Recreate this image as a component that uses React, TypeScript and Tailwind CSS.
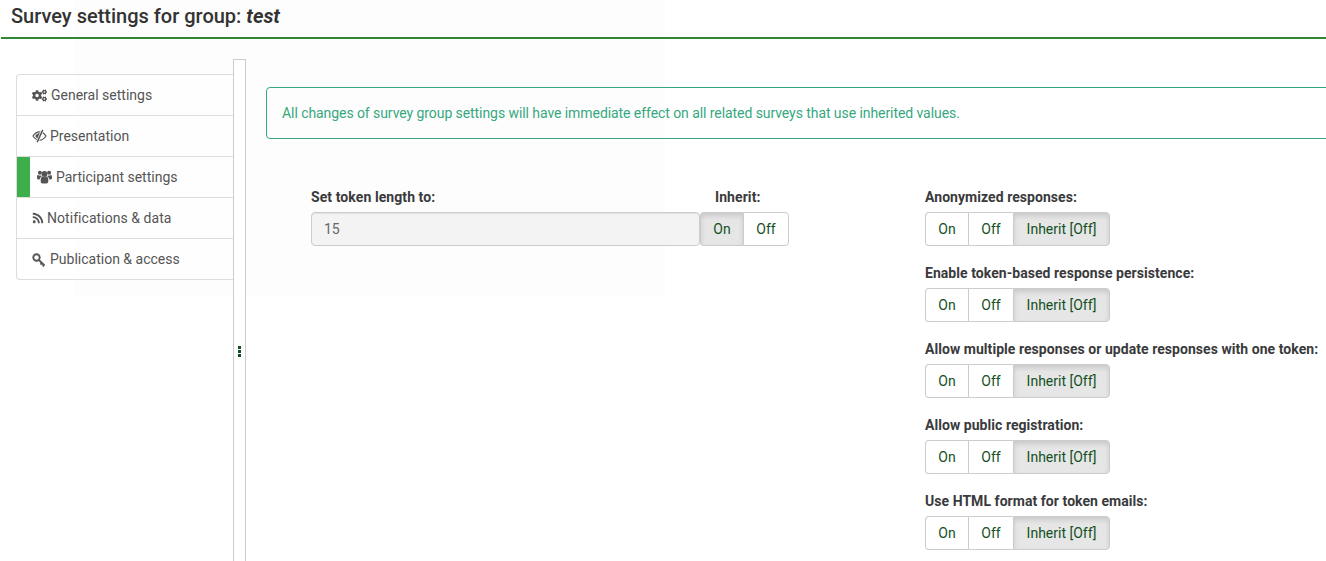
import type { ReactNode } from "react";
import { FaCogs, FaRss } from "react-icons/fa";

function EyeSlash() {
  return (
    <svg width="15" height="14" viewBox="0 0 16 15" className="shrink-0" fill="none">
      <path d="M1 7.5C3 4.6 5.4 3 8 3s5 1.6 7 4.5C13 10.4 10.6 12 8 12S3 10.4 1 7.5Z" stroke="#555" strokeWidth="1.3" />
      <path d="M3.5 7.5C4.6 5.8 6 4.8 7.8 4.4L9.6 4.9 6.4 10.6C5.2 10.1 4.300 9 3.500 7.500Z" fill="#555" />
      <path d="M11.500 1 5.500 14" stroke="#ffffff" strokeWidth="3" />
      <path d="M11.500 1 5.500 14" stroke="#555" strokeWidth="1.600" />
    </svg>
  );
}

function Users() {
  return (
    <svg width="15" height="14" viewBox="0 0 15 14" className="shrink-0" fill="#555">
      <circle cx="7.500" cy="4" r="2.900" />
      <circle cx="2.900" cy="2.800" r="2" />
      <circle cx="12.100" cy="2.800" r="2" />
      <path d="M3.700 9.500C3.700 7.700 4.600 6.700 5.600 6.500 6.700 7.400 8.300 7.400 9.400 6.500 10.400 6.700 11.300 7.700 11.300 9.500V11.500C11.300 12.800 10.400 13.500 9.300 13.500H5.700C4.600 13.500 3.700 12.800 3.700 11.500Z" />
      <path d="M0 6.600C0 5.600.5 5 1.200 5 2.100 5.700 3 5.800 3.900 5.600 4.100 6 4.400 6.200 4.700 6.400 3.500 6.900 2.700 8 2.700 9.400H1.200C.5 9.400 0 9 0 8.300Z" />
      <path d="M15 6.600C15 5.600 14.500 5 13.800 5 12.900 5.700 12 5.800 11.100 5.600 10.900 6 10.600 6.200 10.300 6.400 11.500 6.900 12.300 8 12.300 9.400H13.800C14.500 9.400 15 9 15 8.300Z" />
    </svg>
  );
}

function Key() {
  return (
    <svg width="14" height="14" viewBox="0 0 14 14" className="shrink-0" fill="none" stroke="#555">
      <circle cx="4.500" cy="4.500" r="3.200" strokeWidth="1.900" />
      <path d="M6.800 6.800 12.500 12.500M10 10l-1.500 1.500M12 12l-1.300 1.300" strokeWidth="1.900" />
    </svg>
  );
}

const nav: { label: string; icon: ReactNode; gap: string; active?: boolean; cls?: string }[] = [
  { label: "General settings", icon: <FaCogs size={15} className="shrink-0 text-[#555]" />, gap: "gap-[4px]" },
  { label: "Presentation", icon: <EyeSlash />, gap: "gap-[3px]" },
  { label: "Participant settings", icon: <Users />, gap: "gap-[4px]", active: true },
  { label: "Notifications & data", icon: <FaRss size={12} className="shrink-0 text-[#555]" />, gap: "gap-[3px]", cls: "tracking-[0.05px]" },
  { label: "Publication & access", icon: <Key />, gap: "gap-[4px]" },
];

const toggles = [
  "Anonymized responses:",
  "Enable token-based response persistence:",
  "Allow multiple responses or update responses with one token:",
  "Allow public registration:",
  "Use HTML format for token emails:",
];

function Seg({ children, active, w, cls = "" }: { children: string; active?: boolean; w: string; cls?: string }) {
  return (
    <button
      className={`${w} h-full flex items-center justify-center text-[14px] border-y border-l border-[#cccccc] text-[#14501f] ${
        active ? "bg-[#e6e6e6] border-[#adadad] shadow-[inset_0_3px_5px_rgba(0,0,0,0.125)]" : "bg-white"
      } ${cls}`}
    >
      {children}
    </button>
  );
}

export default function App() {
  return (
    <div className="relative h-[561px] w-[1326px] overflow-hidden bg-white font-['Roboto',sans-serif] text-[14px]">
      <div className="absolute left-[75px] top-0 h-[296px] w-[590px] bg-[#fdfdfd]" />
      <div className="relative flex h-full flex-col">
        <header className="ml-[1px] flex h-[39px] shrink-0 items-center border-b-2 border-[#328637] pb-[6px] pl-[10px] text-[20px] font-medium leading-none text-[#333]">
          <span>
            Survey settings for group: <em className="font-bold">test</em>
          </span>
        </header>

        <div className="flex min-h-0 flex-1">
          <nav className="ml-[16px] mt-[35px] h-[206px] w-[217px] shrink-0 rounded-l-[4px] border-y border-l border-[#dddddd] bg-white/60">
            {nav.map(({ label, icon, gap, active, cls }, i) => (
              <div
                key={label}
                className={`flex h-[41px] items-center text-[#555] ${i < nav.length - 1 ? "border-b border-[#dddddd]" : "h-[40px]"}`}
              >
                {active && <div className="h-full w-[13px] shrink-0 bg-[#3ead4b]" />}
                <div className={`flex items-center ${gap} ${active ? "pl-[7px]" : "pl-[15px]"}`}>
                  {icon}
                  <span className={cls}>{label}</span>
                </div>
              </div>
            ))}
          </nav>

          <div className="mt-[20px] flex w-[13px] shrink-0 items-center justify-center border-x border-t border-[#cccccc] bg-white">
            <div className="flex flex-col gap-[1px] pt-[82px]">
              <span className="h-[3px] w-[3px] bg-[#14501f]" />
              <span className="h-[3px] w-[3px] bg-[#14501f]" />
              <span className="h-[3px] w-[3px] bg-[#14501f]" />
            </div>
          </div>

          <main className="min-w-0 flex-1 pl-[20px] pt-[48px]">
            <div className="flex h-[52px] w-[1100px] items-center rounded-l-[4px] border border-[#36a87e] pl-[15px] tracking-[-0.07px] text-[#36a87e]">
              All changes of survey group settings will have immediate effect on all related surveys that use inherited values.
            </div>

            <div className="mt-[48px] flex items-start pl-[45px]">
              <div className="w-[614px] shrink-0">
                <div className="flex">
                  <div className="w-[389px] shrink-0">
                    <label className="block h-[25px] pt-[1px] font-bold tracking-[0.08px] text-[#3a3a3c] leading-[18px]">Set token length to:</label>
                    <div className="flex h-[34px] items-center rounded-[4px] border border-[#cccccc] bg-[#eeeeee]/70 pl-[12px] text-[#666] shadow-[inset_0_1px_1px_rgba(0,0,0,0.075)]">
                      15
                    </div>
                  </div>
                  <div>
                    <label className="block h-[25px] pl-[15px] pt-[1px] font-bold tracking-[0.08px] text-[#3a3a3c] leading-[18px]">Inherit:</label>
                    <div className="flex h-[34px]">
                      <Seg active w="w-[43px]" cls="rounded-l-[4px]">On</Seg>
                      <Seg w="w-[46px]" cls="rounded-r-[4px] border-r">Off</Seg>
                    </div>
                  </div>
                </div>
              </div>

              <div className="flex flex-col gap-[17px]">
                {toggles.map((t) => (
                  <div key={t}>
                    <label className="block h-[25px] whitespace-nowrap pt-[1px] font-bold tracking-[0.05px] text-[#3a3a3c] leading-[18px]">{t}</label>
                    <div className="flex h-[34px]">
                      <Seg w="w-[43px]" cls="rounded-l-[4px]">On</Seg>
                      <Seg w="w-[45px]">Off</Seg>
                      <Seg active w="w-[97px]" cls="rounded-r-[4px] border-r">Inherit [Off]</Seg>
                    </div>
                  </div>
                ))}
              </div>
            </div>
          </main>
        </div>
      </div>
    </div>
  );
}
